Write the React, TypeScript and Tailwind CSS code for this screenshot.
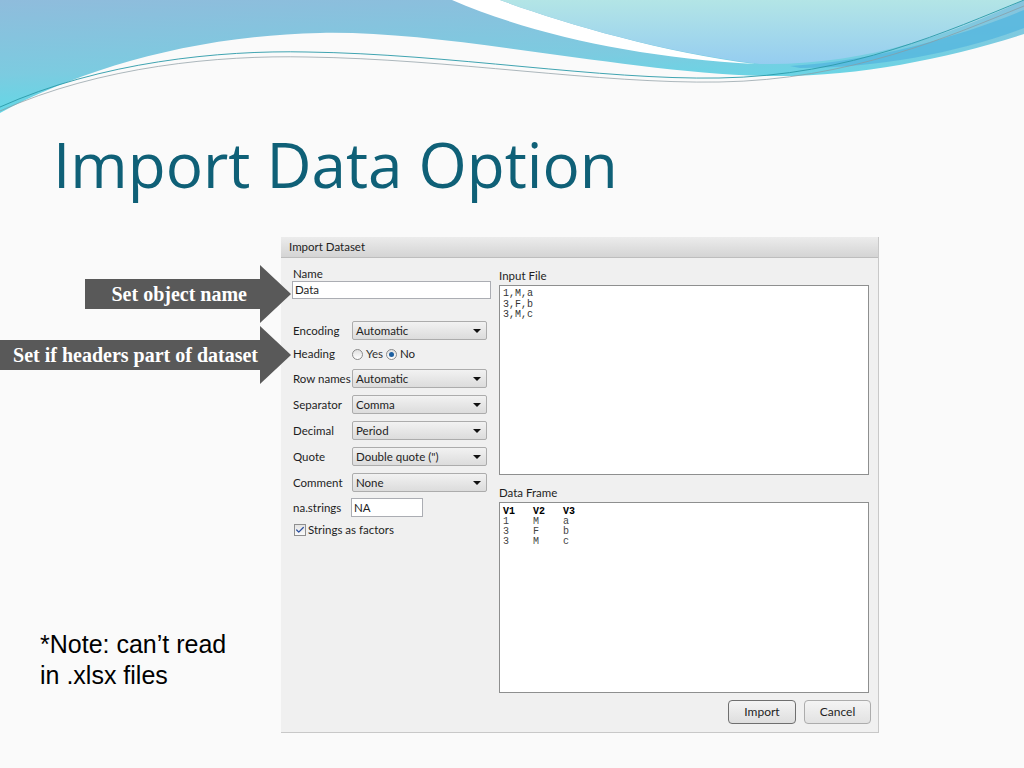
import { Check } from "lucide-react";

const optionRows = [
  { label: "Row names", value: "Automatic" },
  { label: "Separator", value: "Comma" },
  { label: "Decimal", value: "Period" },
  { label: "Quote", value: "Double quote (\")" },
  { label: "Comment", value: "None" },
];

function Wave() {
  return (
    <svg width="1024" height="115" viewBox="0 0 1024 115" className="block shrink-0">
      <defs>
        <linearGradient id="blueL" x1="0" y1="0" x2="0.3" y2="1">
          <stop offset="0" stopColor="#8fbcdc" />
          <stop offset="0.6" stopColor="#7ccbe0" />
          <stop offset="1" stopColor="#5ddbe8" />
        </linearGradient>
        <linearGradient id="cyanR" x1="0" y1="0" x2="0" y2="1">
          <stop offset="0" stopColor="#b3e5e6" />
          <stop offset="1" stopColor="#95cdf0" />
        </linearGradient>
      </defs>
      <path d="M0,0 H1024 V34 C950,58 860,76 780,76 C640,76 450,30 320,33 C190,36 80,70 0,113 Z" fill="url(#blueL)" />
      <path d="M452,0 C530,34 640,58 755,64 C660,52 560,22 500,0 Z" fill="#ffffff" />
      <path d="M500,0 C560,22 660,52 760,64 C870,66 960,30 1024,0 Z" fill="url(#cyanR)" />
      <path d="M790,66 C880,60 960,36 1024,10 V28 C960,52 880,68 800,68 Z" fill="#55b6de" opacity="0.8" />
      <path d="M0,107 C100,62 220,50 307,52 C450,54 600,80 719,78 C850,76 950,30 1024,0" fill="none" stroke="#2a9aa8" strokeWidth="0.9" />
      <path d="M0,111 C100,66 220,55 307,57 C450,59 600,84 719,82 C850,80 950,36 1024,6" fill="none" stroke="#8a9aa0" strokeWidth="0.7" />
    </svg>
  );
}

function Select({ value }: { value: string }) {
  return (
    <div className="w-[135px] h-[19px] shrink-0 flex items-center justify-between pl-[3px] pr-[5px] border border-[#acacac] rounded-[2px] bg-gradient-to-b from-[#f2f2f2] to-[#dcdcdc]">
      <span>{value}</span>
      <span className="w-0 h-0 border-l-[4px] border-r-[4px] border-t-[4px] border-l-transparent border-r-transparent border-t-[#111]" />
    </div>
  );
}

function Radio({ checked }: { checked?: boolean }) {
  return (
    <span className="w-[11px] h-[11px] rounded-full border border-[#8a8a8a] bg-gradient-to-b from-[#e0e0e0] to-[#ffffff] flex items-center justify-center">
      {checked && <span className="w-[5px] h-[5px] rounded-full bg-[#1d5fa0]" />}
    </span>
  );
}

function Arrow({ text, width, top, left, pad }: { text: string; width: number; top: number; left: number; pad: number }) {
  return (
    <div className="absolute flex items-center" style={{ top, left }}>
      <div
        className="h-[30px] bg-[#595959] text-white font-bold text-[20px] font-['Liberation_Serif',serif] flex items-center justify-end whitespace-nowrap"
        style={{ width, paddingRight: pad }}
      >
        {text}
      </div>
      <div className="w-0 h-0 border-t-[29px] border-b-[29px] border-l-[31px] border-t-transparent border-b-transparent border-l-[#595959]" />
    </div>
  );
}

export default function App() {
  return (
    <div className="relative w-[1024px] h-[768px] overflow-hidden bg-[#fafafa] flex flex-col">
      <Wave />

      <h1 className="ml-[53px] mt-[18px] text-[62px] leading-none text-[#0f6077] font-['Open_Sans',sans-serif]">
        Import Data Option
      </h1>

      <div className="flex mt-[42px]">
        {/* Left column with note */}
        <div className="w-[281px] pt-[392px] pl-[40px] font-['Liberation_Sans',sans-serif] text-[25px] leading-[31px] text-black">
          <p>*Note: can’t read</p>
          <p>in .xlsx files</p>
        </div>

        {/* Dialog */}
        <div className="w-[598px] h-[496px] bg-[#f0f0f0] border-r border-b border-[#c8c8c8] flex flex-col font-['Lato',sans-serif] text-[11.5px] text-[#1e1e1e]">
          <div className="h-[21px] shrink-0 flex items-center px-[8px] bg-gradient-to-b from-[#ececec] to-[#d4d4d4] border-b border-[#bdbdbd]">
            Import Dataset
          </div>

          <div className="flex flex-1">
            {/* Options */}
            <div className="w-[211px] pl-[11px] flex flex-col">
              <div className="mt-[9px] h-[14px] leading-[14px] pl-[1px]">Name</div>
              <div className="w-[199px] h-[18px] border border-[#abadb3] bg-white flex items-center pl-[2px]">Data</div>

              <div className="mt-[22px] h-[19px] flex items-center">
                <span className="w-[60px] shrink-0 pl-[1px] whitespace-nowrap">Encoding</span>
                <Select value="Automatic" />
              </div>

              <div className="mt-[4px] h-[20px] flex items-center">
                <span className="w-[60px] shrink-0 pl-[1px]">Heading</span>
                <Radio />
                <span className="ml-[3px] mr-[3px] text-[#333]">Yes</span>
                <Radio checked />
                <span className="ml-[3px]">No</span>
              </div>

              <div className="mt-[5px] flex flex-col gap-[7px]">
                {optionRows.map((row) => (
                  <div key={row.label} className="h-[19px] flex items-center">
                    <span className="w-[60px] shrink-0 pl-[1px] whitespace-nowrap">{row.label}</span>
                    <Select value={row.value} />
                  </div>
                ))}
              </div>

              <div className="mt-[6px] h-[19px] flex items-center">
                <span className="w-[59px] shrink-0 pl-[1px] whitespace-nowrap">na.strings</span>
                <div className="w-[72px] h-[19px] border border-[#abadb3] bg-white flex items-center pl-[2px]">NA</div>
              </div>

              <div className="mt-[6px] h-[14px] flex items-center pl-[2px]">
                <span className="w-[12px] h-[12px] border border-[#8f8f8f] bg-gradient-to-b from-[#e4e4e4] to-[#fafafa] flex items-center justify-center">
                  <Check className="w-[10px] h-[10px] text-[#2b4f9e]" strokeWidth={3} />
                </span>
                <span className="ml-[2px]">Strings as factors</span>
              </div>
            </div>

            {/* Input file and data frame */}
            <div className="flex-1 pl-[7px] pr-[9px] flex flex-col">
              <div className="mt-[11px] h-[14px] leading-[14px]">Input File</div>
              <div className="mt-[2px] h-[190px] border border-[#8e8f8f] bg-white pl-[3px] pt-[3px] font-['Liberation_Mono',monospace] text-[10px] leading-[10.5px] text-[#333]">
                <div>1,M,a</div>
                <div>3,F,b</div>
                <div>3,M,c</div>
              </div>
              <div className="mt-[11px] h-[14px] leading-[14px]">Data Frame</div>
              <div className="mt-[2px] h-[191px] border border-[#8e8f8f] bg-white pl-[3px] pt-[4px] font-['Liberation_Mono',monospace] text-[10px] leading-[10px] text-[#444] whitespace-pre">
                <div className="font-bold text-black">V1   V2   V3</div>
                <div>1    M    a</div>
                <div>3    F    b</div>
                <div>3    M    c</div>
              </div>
            </div>
          </div>

          <div className="h-[39px] shrink-0 flex justify-end items-start gap-[8px] pr-[7px] pt-[7px]">
            <button className="w-[68px] h-[24px] rounded-[4px] border border-[#6f6f6f] bg-gradient-to-b from-[#f4f4f4] to-[#dedede] text-[12px]">
              Import
            </button>
            <button className="w-[67px] h-[24px] rounded-[4px] border border-[#acacac] bg-gradient-to-b from-[#f4f4f4] to-[#e2e2e2] text-[12px]">
              Cancel
            </button>
          </div>
        </div>
      </div>

      <Arrow text="Set object name" width={175} top={265} left={85} pad={13} />
      <Arrow text="Set if headers part of dataset" width={260} top={326} left={0} pad={2} />
    </div>
  );
}
